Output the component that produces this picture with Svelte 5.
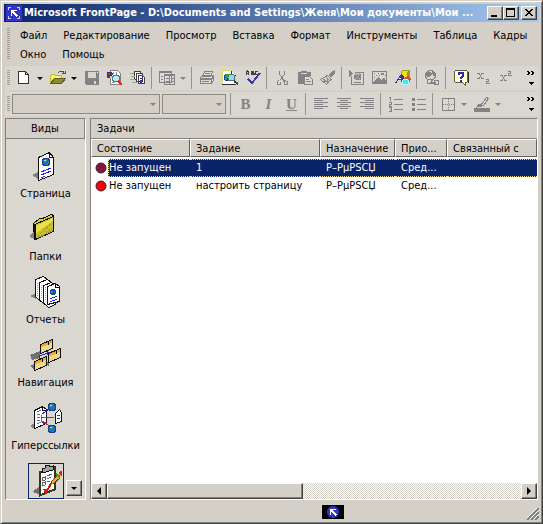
<script lang="ts">
	type Task = {
		id: number;
		color: string;
		state: string;
		title: string;
		assigned: string;
		priority: string;
		linked: string;
	};

	const menu = [
		'Файл',
		'Редактирование',
		'Просмотр',
		'Вставка',
		'Формат',
		'Инструменты',
		'Таблица',
		'Кадры',
		'Окно',
		'Помощь'
	];

	// '|' is a separator, 'v' a drop-down arrow, '-' a disabled one
	const standard = [
		'new', 'v', 'open', 'v', 'save', 'find', 'publish', '|',
		'panes', '-', '|',
		'print', 'preview', 'spelling', '|',
		'cut', 'paste', 'painter', '|',
		'component', 'image', 'drawing', '|',
		'link', '|',
		'help', 'sub', 'sup'
	];
	const formatting = [
		'|', 'bold', 'italic', 'underline', '|',
		'left', 'center', 'right', '|',
		'numbers', 'bullets', '|',
		'borders', '-', 'highlight', '-'
	];

	const views = [
		{ id: 'page', label: 'Страница' },
		{ id: 'folders', label: 'Папки' },
		{ id: 'reports', label: 'Отчеты' },
		{ id: 'navigation', label: 'Навигация' },
		{ id: 'hyperlinks', label: 'Гиперссылки' }
	];

	const columns = ['Состояние', 'Задание', 'Назначение', 'Прио...', 'Связанный с'];

	// user name as stored: UTF-8 bytes read as cp1251
	const user = 'Р–РµР\u0405СЏ';
	const tasks: Task[] = [
		{ id: 1, color: '#841439', state: 'Не запущен', title: '1', assigned: user, priority: 'Сред...', linked: '' },
		{ id: 2, color: '#ff0000', state: 'Не запущен', title: 'настроить страницу', assigned: user, priority: 'Сред...', linked: '' }
	];

	let selected = $state(1);
	let view = $state('tasks');
</script>

{#snippet globe(x: number, y: number)}
	<circle cx={x} cy={y} r="4.5" fill="#203890" stroke="none" />
	<circle cx={x} cy={y} r="3" fill="#2860d8" stroke="none" />
	<path d="M{x - 3} {y - 1}l2-2h3l-1 3-2 1zM{x + 1} {y + 1}l2-1-1 3h-2z" fill="#18a048" stroke="none" />
	<path d="M{x - 2} {y - 2}h2v1h-2z" fill="#a8e8f8" stroke="none" />
{/snippet}

{#snippet tool(name: string)}
	<svg viewBox="0 0 16 16" width="16" height="16" fill="none" stroke="#848284" shape-rendering="crispEdges" aria-hidden="true">
		{#if name === 'new'}
			<path d="M2.5 1.5h7l3 3v9h-10z" fill="#fff" stroke="#303030" />
			<path d="M9.5 1.5v3h3" stroke="#303030" />
		{:else if name === 'open'}
			<path d="M1 5h4l1 1h6v3H6l-4 5H1z" fill="#f8f060" stroke="none" />
			<path d="M.5 13V5.5l1-1h3l1 1h6v3" stroke="#c0b830" />
			<path d="M2 7h1v1H2zM4 8h1v1H4zM6 7h1v1H6zM8 7h1v1H8zM2 10h1v1H2z" fill="#fff" stroke="none" />
			<path d="M.5 13.5l4-5h11l-4 5z" fill="#8c8c30" stroke="#5c5c20" />
			<path d="M8 3l2-2h3l1 2M12 3.5h3V1" stroke="#505050" />
		{:else if name === 'save'}
			<path d="M1 1h14v14H2l-1-1z" fill="#848284" stroke="none" />
			<path d="M4 2h8v6H4zM10 11h2v3h-2z" fill="#d8d5ce" stroke="none" />
			<path d="M13 2h1v1h-1z" fill="#fff" stroke="none" />
		{:else if name === 'find'}
			<path d="M3.5.5h7l3 3v11h-10z" fill="#fff" stroke="#808080" />
			<path d="M6 2h1v2H6zM9 2h1v3H9zM5 12h3v1H5z" fill="#999" stroke="none" />
			<path d="M0 2h5v4H0z" fill="#303068" stroke="none" />
			<path d="M1 3h2v2H1zM5 6h2v2H5z" fill="#e03020" stroke="none" />
			<path d="M4 3h2v2H4zM0 6h3v2H0z" fill="#2040e0" stroke="none" />
			<path d="M3 6h2v2H3z" fill="#f0d820" stroke="none" />
			<circle cx="9" cy="8.5" r="3.5" fill="#a8f4f8" stroke="#607878" />
			<path d="M11 11l4 4" stroke="#e02820" stroke-width="2" />
		{:else if name === 'publish'}
			<path d="M4.5 1.5h6v8h-6z" fill="#fff" stroke="#404040" />
			<path d="M6.5 3.5h6v8h-6zM8.5 5.5h4l2 2v6h-6z" fill="#fff" stroke="#404040" />
			<path d="M10 8.5h3M10 10.5h3M10 12.5h2" stroke="#3030a0" />
			<path d="M0 3.5h4M1 6.5h4M0 9.5h5M2 12.5h5" stroke="#a0a0a0" />
		{:else if name === 'panes'}
			<path d="M.5 1.5h12v11H.5zM5.5 4.5h10v10h-10z" fill="#dedbd4" />
			<path d="M0 2.5h13M5 5.5h11M2 6.5h2M2 9.5h2M7 8.5h3M7 11.5h3M12 8.5h3M12 11.5h3" />
			<path d="M10.5 6v8" />
		{:else if name === 'print'}
			<path d="M5.5 1.5h8l-2 5h-8zM1.5 7.5l3-2h10l-2 4h-11z" fill="#dedbd4" />
			<path d="M1.5 8.5h11v5h-11zM12.5 8.5l2-3v5l-2 3M3 11.5h7M6 3.5h5" />
		{:else if name === 'preview'}
			<path d="M1 1h9l4 4v9H1z" fill="#fff" stroke="none" />
			<path d="M.5 14V.5h9l4 4V14" stroke="#e0d860" />
			<path d="M0 14.5h14M9.5 1v4h4" stroke="#303030" />
			<circle cx="6" cy="7.5" r="4" fill="#2038b8" stroke="none" />
			<path d="M4 4h3v3H5v3H3V6z" fill="#20a850" stroke="none" />
			<circle cx="9.5" cy="7.5" r="3.5" fill="#90dce8" stroke="#507070" />
			<path d="M12 11l4 3" stroke="#404040" stroke-width="2" />
		{:else if name === 'spelling'}
			<path d="M1.5 5V2l1-1 1 1v3M1 3.5h3M6.5 1v4M6 1.5h2v1H6M6 4.5h3v-1H7M13 1.5h-2l-.5 1v1l.5 1h2" stroke="#404040" />
			<path d="M3 9l4 4 8-10" stroke="#3838a8" stroke-width="2" />
		{:else if name === 'cut'}
			<path d="M5.5 1v3l4 6M10.5 1v3l-4 6M5 10.5l-2 1v3h3v-3M9 9.5l1 2v3h3v-3z" />
		{:else if name === 'paste'}
			<path d="M1 2h3V1h6v1h4v4H8v8H1z" fill="#848284" stroke="none" />
			<path d="M4 3h6" stroke="#dedbd4" />
			<path d="M7.5 6.5h5l3 3v5h-8zM9 9.5h3M9 11.5h5" fill="#dedbd4" />
		{:else if name === 'painter'}
			<path d="M15 0v3l-4 5-3-3 5-4z" fill="#848284" stroke="none" />
			<path d="M7.5 5.5l4 4-2 1-4-4zM5.5 6.5l-5 3 6 5 3-4M3 9l4 3M2 11h3M7 9v3" />
		{:else if name === 'component'}
			<path d="M0 0l4 3-4 4z" fill="#848284" stroke="none" />
			<path d="M2.5 6v8.5h12v-12h-9" />
			<path d="M6 4h5l1 1v4l-1 1H6L5 9V5zM5 12h7v1H5z" fill="#848284" stroke="none" />
			<path d="M6 3l5 7M11 3L6 10" stroke="#a8a6a2" />
		{:else if name === 'image'}
			<path d="M.5 1.5h14v12H.5z" />
			<path d="M1 13l5-6 3 3 3-3 3 6zM9 3h3v2H9zM2 3h1v1H2zM4 5h1v1H4zM6 3h1v1H6zM2 7h1v1H2zM7 5h1v1H7zM13 5h1v1h-1z" fill="#848284" stroke="none" />
		{:else if name === 'drawing'}
			<path d="M6 2l2-2h6v7l-3 2H6z" fill="#f0e018" stroke="#a89830" />
			<path d="M12 2l2-2v7l-2 2z" fill="#a89018" stroke="none" />
			<path d="M0 13h2l1-3h3l1 3h2V6L6 4z" fill="#3030b0" stroke="none" />
			<path d="M4 8h2v1H4z" fill="#fff" stroke="none" />
			<path d="M8 9l5-3 3 2-1 4-4 2z" fill="#d05040" stroke="none" />
			<circle cx="10.5" cy="12" r="3" fill="#38f0f0" stroke="#b0ffff" />
		{:else if name === 'link'}
			<circle cx="6.5" cy="5.5" r="5" />
			<path d="M3 2h3l2 2-2 3H3L2 5zM8 1l3 2v3H9z" fill="#848284" stroke="none" />
			<path d="M3.5 9.5h4v4h-4zM10.5 10.5h4v4h-4z" fill="#dedbd4" />
			<path d="M6 12.5h6" stroke-width="2" />
		{:else if name === 'help'}
			<path d="M1.5 1.5l1-1h11l1 1v10l-1 1h-1v3l-3-3h-7l-1-1z" fill="#ffffd0" stroke="#605c40" />
			<path d="M15.5 2v10h-1" stroke="#303030" />
			<path d="M6 5V3h4v3L8 8v1M8 10v2" stroke="#2828b0" stroke-width="2" />
		{:else if name === 'sub'}
			<path d="M1 3.5h2l3 5h2M8 3.5H6l-3 5H1" />
			<path d="M10 9.5h2.5v2H10.5v2H14" />
		{:else if name === 'sup'}
			<path d="M1 5.5h2l3 5h2M8 5.5H6l-3 5H1" />
			<path d="M9 1.5h2.5v2H9.5v2H13" />
		{:else if name === 'left' || name === 'center' || name === 'right'}
			<path d="M1 2.5h14M1 6.5h14M1 10.5h14" />
			{#if name === 'left'}
				<path d="M1 4.5h9M1 8.5h9M1 12.5h9" />
			{:else if name === 'center'}
				<path d="M4 4.5h8M4 8.5h8M4 12.5h8" />
			{:else}
				<path d="M6 4.5h9M6 8.5h9M6 12.5h9" />
			{/if}
		{:else if name === 'numbers'}
			<path d="M6 3.5h9M6 8.5h9M6 13.5h9M1 1.5h1.5V5M1 6.5h2v2H1.5V10H4M1 11.5h2.5v4H1M2 13.5h1" />
		{:else if name === 'bullets'}
			<path d="M1 2h3v3H1zM1 7h3v3H1zM1 12h3v3H1z" fill="#848284" stroke="none" />
			<path d="M6 3.5h9M6 8.5h9M6 13.5h9" />
		{:else if name === 'borders'}
			<path d="M2.5 2.5h12v12h-12z" />
			<path d="M8.5 3v11M3 8.5h11" stroke-dasharray="1 1" />
		{:else if name === 'highlight'}
			<path d="M12.5 1.5l2 1-5 7h-3zM5 8l3 2-5 1z" />
			<path d="M4 8h3v2H4z" fill="#848284" stroke="none" />
			<path d="M0 12h16v4H0z" fill="#848284" stroke="none" />
		{/if}
	</svg>
{/snippet}

{#snippet viewIcon(name: string)}
	<svg viewBox="0 0 32 32" width="32" height="32" fill="none" stroke="#101010" shape-rendering="crispEdges" aria-hidden="true">
		{#if name === 'page'}
			<path d="M3 25l6-3v7z" fill="#808080" stroke="none" />
			<path d="M9.5 30.5v-23l11-5 4 5v17z" fill="#fff" />
			<path d="M20.5 2.5v5h4" />
			<path d="M12 8l3-2" stroke="#c8e8f8" />
			{@render globe(17, 12)}
			<path d="M12 22l10-4M12 25l10-4M12 28l4-2" stroke="#2020f0" />
		{:else if name === 'folders'}
			<path d="M0 23l5-4v7z" fill="#808080" stroke="none" />
			<path d="M4.5 10.5l6-5h3l9-4 2 1v15l-19 9z" fill="#d8d040" />
			<path d="M5.5 11.5l19-8v15l-18 8z" fill="#c8c030" />
			<path d="M7 13l17-8v3L7 20z" fill="#e8e050" stroke="none" />
			<path d="M8 24l15-14M9 25l14-10M12 24l11-7" stroke="#a09820" stroke-dasharray="1 1" />
			<path d="M5.5 11.5v15" stroke-width="2" />
		{:else if name === 'reports'}
			<path d="M1 20l6-3v6z" fill="#808080" stroke="none" />
			{#each [0, 4, 8] as o}
				<path d="M{6.5 + o} {20.5 + o / 2}v-17l8-3 4 3v19l-7 3z" transform="translate(0 {o / 4})" fill="#fff" />
				<path d="M{8.5 + o} {7 + o / 2}v13" stroke="#a0a0a0" stroke-dasharray="1 1" />
			{/each}
			<path d="M18.5 28.5v-18l8-3 4 3v15z" fill="#fff" />
			<path d="M26.5 7.5v4h4" />
			<circle cx="24" cy="16" r="3" fill="#1850b8" stroke="none" />
			<path d="M22 15h2v2h-2z" fill="#18a048" stroke="none" />
			<path d="M21 23l7-3M21 26l7-3" stroke="#2020f0" />
		{:else if name === 'navigation'}
			<path d="M0 16l10-4v7l-8 2zM15 25l4-3v5zM0 27l4-2v5z" fill="#707070" stroke="none" />
			<path d="M17.5 12v4M9.5 20v-3l17-6" stroke="#2020f0" />
			{#each [[10, 0], [4, 17], [18, 9]] as [x, y]}
				<path d="M{x + 0.5} {y + 5.5}l12-5v9l-12 5z" fill="#e8d890" />
				<path d="M{x + 1} {y + 7}l11-5" stroke="#f0a828" stroke-width="3" />
				<path d="M{x + 0.5} {y + 5.5}l12-5M{x + 8} {y + 3}v3" />
			{/each}
		{:else if name === 'hyperlinks'}
			<path d="M0 24l5-3v6z" fill="#808080" stroke="none" />
			<path d="M4.5 26.5v-18l8-4 4 3v14z" fill="#fff" />
			<path d="M12.5 4.5v4h4" />
			<path d="M7 10l4-2M7 13l3-1M7 16l3-1M7 19l3-1M7 22l6-3M11 13v6" stroke="#707070" />
			<path d="M25.5 21.5v-10l4-4 2 3v9z" fill="#fff" />
			<path d="M27 14l3-1M27 17l3-1" stroke="#2040e0" />
			<path d="M11 15.5h13M13 19l6 5" stroke="#e02020" />
			<path d="M12 12l7-5M12 20l3 2" stroke="#2020f0" />
			{@render globe(22, 5)}
			{@render globe(22, 27)}
		{:else if name === 'tasks'}
			<path d="M2 27l7-5v7z" fill="#707070" stroke="none" />
			<path d="M9.5 30.5v-23l15-5v22z" fill="#fff" stroke="#35351a" stroke-width="2" />
			<path d="M12 8V4l3-1 1-3h3l1 2 3-1v4z" fill="#a0a0a0" />
			<path d="M12 13l3-1v3l-3 1zM12 18l3-1v3l-3 1zM17 11l5-2M17 14l4-2M17 17l3-1" stroke="#606060" />
			<path d="M14 24l2 3 5-8" stroke="#f01010" stroke-width="2" />
			<path d="M20 21l2-6 7-7 3 3-8 7z" fill="#f8b020" stroke="none" />
			<path d="M20 21l2-5M22 16l6-6M23 19l7-6" stroke="#604010" />
			<path d="M26 9l4 3" stroke="#18a030" stroke-width="2" />
			<path d="M28 8l2-2h2v4l-1 1z" fill="#e02020" stroke="none" />
		{/if}
	</svg>
{/snippet}

{#snippet strip(items: string[])}
	{#each items as item}
		{#if item === '|'}
			<span class="sep"></span>
		{:else if item === 'v' || item === '-'}
			<button class="drop" disabled={item === '-'} aria-label="Ещё"><span class="tri"></span></button>
		{:else if item === 'bold'}
			<button class="tool letter" disabled><b>B</b></button>
		{:else if item === 'italic'}
			<button class="tool letter" disabled><i>I</i></button>
		{:else if item === 'underline'}
			<button class="tool letter" disabled><u>U</u></button>
		{:else}
			<button class="tool" aria-label={item}>{@render tool(item)}</button>
		{/if}
	{/each}
{/snippet}

{#snippet overflow()}
	<button class="more" aria-label="Другие кнопки">
		<svg viewBox="0 0 8 16" width="8" height="16" fill="none" stroke="#000" shape-rendering="crispEdges" aria-hidden="true">
			<path d="M0 1l2 2-2 2M1 1l2 2-2 2M4 1l2 2-2 2M5 1l2 2-2 2" />
			<path d="M2 12h5v1H6v1H5v1H4v-1H3v-1H2z" fill="#000" stroke="none" />
		</svg>
	</button>
{/snippet}

<main class="window">
	<header class="titlebar">
		<svg viewBox="0 0 16 16" width="16" height="16" fill="none" stroke="#fff" shape-rendering="crispEdges" aria-hidden="true">
			<path d="M0 0h16v16H0z" fill="#3333cc" stroke="none" />
			<path d="M5 2.5H2.5V5M11 2.5h2.5V5M5 13.5H2.5V11M11 13.5h2.5V11" stroke="#d0d0ff" />
			<path d="M5 5h6v1H8v1h1v1h1v1h1v1h1v1h-1v1h-1v-1H9v-1H8V9H7V8H6v3H5z" fill="#fff" stroke="none" />
		</svg>
		<h1>Microsoft FrontPage - D:\Documents and Settings\Женя\Мои документы\Мои ...</h1>
		<div class="controls">
			<button aria-label="Свернуть">
				<svg viewBox="0 0 12 10" width="12" height="10" aria-hidden="true"><path d="M2 7h6v2H2z" /></svg>
			</button>
			<button aria-label="Развернуть">
				<svg viewBox="0 0 12 10" width="12" height="10" aria-hidden="true"><path d="M1 0h9v9H1zM2 2v6h7V2z" fill-rule="evenodd" /></svg>
			</button>
			<button class="close" aria-label="Закрыть">
				<svg viewBox="0 0 12 10" width="12" height="10" shape-rendering="crispEdges" aria-hidden="true">
					<path d="M2 1h2v1h1v1h2V2h1V1h2v1H9v1H8v1H7v1h1v1h1v1h1v1H8V7H7V6H5v1H4v1H2V7h1V6h1V5h1V4H4V3H3V2H2z" />
				</svg>
			</button>
		</div>
	</header>

	<nav class="menubar">
		<span class="grip"></span>
		<div class="menu">
			{#each menu as item}
				<button>{item}</button>
			{/each}
		</div>
	</nav>

	<div class="toolbar">
		<span class="grip"></span>
		{@render strip(standard)}
		{@render overflow()}
	</div>
	<div class="toolbar">
		<span class="grip"></span>
		<span class="combo style"><select disabled aria-label="Стиль"></select></span>
		<span class="combo"><select disabled aria-label="Шрифт"></select></span>
		{@render strip(formatting)}
		{@render overflow()}
	</div>

	<div class="content">
		<aside class="views">
			<h2>Виды</h2>
			<div class="view-list">
				{#each views as v (v.id)}
					<button class="view" onclick={() => (view = v.id)}>
						{@render viewIcon(v.id)}
						<span>{v.label}</span>
					</button>
				{/each}
				<button class="view-tasks" class:active={view === 'tasks'} onclick={() => (view = 'tasks')} aria-label="Задачи">
					{@render viewIcon('tasks')}
				</button>
			</div>
			<button class="scroll-down raised" aria-label="Прокрутить вниз"><span class="tri"></span></button>
		</aside>

		<section class="pane">
			<h2>Задачи</h2>
			<div class="list">
				<table>
					<colgroup>
						<col class="c-state" />
						<col class="c-title" />
						<col class="c-assigned" />
						<col class="c-priority" />
						<col />
					</colgroup>
					<thead>
						<tr>
							{#each columns as c}
								<th>{c}</th>
							{/each}
						</tr>
					</thead>
					<tbody>
						{#each tasks as t (t.id)}
							<tr class:selected={selected === t.id} onclick={() => (selected = t.id)}>
								<td class="state">
									<svg viewBox="0 0 12 12" width="12" height="12" aria-hidden="true">
										<circle cx="6" cy="6" r="5" fill={t.color} stroke="#402040" />
									</svg>
									<span>{t.state}</span>
								</td>
								<td>{t.title}</td>
								<td>{t.assigned}</td>
								<td>{t.priority}</td>
								<td>{t.linked}</td>
							</tr>
						{/each}
					</tbody>
				</table>
			</div>
			<div class="hscroll">
				<button class="raised" aria-label="Влево"><span class="tri west"></span></button>
				<span class="thumb raised"></span>
				<span class="track"></span>
				<button class="raised" aria-label="Вправо"><span class="tri east"></span></button>
			</div>
		</section>
	</div>

	<footer class="status">
		<svg viewBox="0 0 22 14" width="22" height="14" aria-hidden="true">
			<path d="M0 0h22v14H0z" fill="#000" />
			<circle cx="11" cy="7" r="6" fill="#3333cc" />
			<path d="M8 4h6v1h-3v1h1v1h1v1h1v1h1v1h-1v1h-1v-1h-1V9h-1V8h-1V7H9v3H8z" fill="#fff" />
		</svg>
		<div class="corner">
			<svg viewBox="0 0 12 12" width="12" height="12" fill="none" aria-hidden="true">
				<path d="M0 12L12 0M4 12l8-8M8 12l4-4" stroke="#808080" stroke-width="2" />
				<path d="M-1 11L11-1M3 11l9-9M7 11l5-5" stroke="#fff" />
			</svg>
		</div>
	</footer>
</main>

<style>
	:global(body) {
		margin: 0;
		background: #d4d0c8;
	}

	.window {
		box-sizing: border-box;
		min-height: 100vh;
		display: flex;
		flex-direction: column;
		padding: 3px;
		border: 1px solid;
		border-color: #d4d0c8 #404040 #404040 #d4d0c8;
		box-shadow: inset 1px 1px #fff, inset -1px -1px #808080;
		background: #d4d0c8;
		color: #000;
		font: 11px/14px 'DejaVu Sans Condensed', Tahoma, 'DejaVu Sans', sans-serif;
		cursor: default;
	}

	button {
		box-sizing: border-box;
		margin: 0;
		padding: 0;
		border: 0;
		background: transparent;
		color: inherit;
		font: inherit;
	}
	svg {
		display: block;
		flex: none;
	}
	h1,
	h2 {
		margin: 0;
		font: inherit;
	}

	.raised,
	.controls button {
		background: #d4d0c8;
		border: 1px solid;
		border-color: #fff #404040 #404040 #fff;
		box-shadow: inset -1px -1px #808080;
	}

	.titlebar {
		display: flex;
		align-items: center;
		gap: 2px;
		height: 18px;
		padding: 0 2px;
		background: linear-gradient(90deg, #0a246a, #a6caf0);
		color: #fff;
	}
	h1 {
		flex: 1;
		min-width: 0;
		overflow: hidden;
		white-space: nowrap;
		font-weight: bold;
	}
	.controls {
		display: flex;
	}
	.controls button {
		display: flex;
		align-items: center;
		justify-content: center;
		width: 16px;
		height: 14px;
	}
	.controls .close {
		margin-left: 2px;
	}

	.grip {
		flex: none;
		width: 3px;
		background: repeating-linear-gradient(#a09d97 0 1px, transparent 1px 2px);
	}

	.menubar {
		display: flex;
		padding: 4px 3px 2px;
	}
	.menubar .grip {
		margin: 2px 0 4px;
	}
	.menu {
		display: flex;
		flex-wrap: wrap;
		margin-left: 2px;
	}
	.menu button {
		height: 19px;
		padding: 0 8px;
	}

	.toolbar {
		display: flex;
		align-items: center;
		height: 24px;
		margin: 0 0 2px 1px;
		padding: 0 2px;
		background: #dad7d0;
	}
	.toolbar .grip {
		height: 16px;
		margin-right: 2px;
	}
	.tool {
		display: flex;
		flex: none;
		align-items: center;
		justify-content: center;
		width: 23px;
		height: 22px;
	}
	.letter {
		color: #848284;
		font: 15px/16px 'Liberation Serif', serif;
		font-weight: bold;
	}
	.drop {
		display: flex;
		flex: none;
		width: 11px;
		padding-left: 2px;
	}
	.drop:disabled {
		color: #848284;
	}
	.tri {
		width: 0;
		height: 0;
		border: 3px solid transparent;
		border-top-color: currentColor;
		border-bottom: 0;
	}
	.sep {
		flex: none;
		width: 1px;
		height: 22px;
		margin: 0 3px 0 2px;
		background: #96938e;
	}
	.more {
		margin-left: auto;
		margin-right: 2px;
	}
	.combo {
		position: relative;
		box-sizing: border-box;
		width: 66px;
		padding-right: 2px;
	}
	.combo.style {
		width: 150px;
	}
	.combo::after {
		content: '';
		position: absolute;
		right: 6px;
		top: 9px;
		border: 3px solid transparent;
		border-top-color: #848284;
		border-bottom: 0;
	}
	select {
		display: block;
		appearance: none;
		box-sizing: border-box;
		width: 100%;
		height: 20px;
		border: 1px solid #8c8984;
		border-radius: 0;
		background: #d4d0c8;
		opacity: 1;
	}

	.content {
		flex: 1;
		display: flex;
		gap: 4px;
		padding: 0 1px;
	}
	.content h2 {
		height: 20px;
		box-sizing: border-box;
		padding: 3px 6px;
		border-bottom: 1px solid #808080;
	}
	.views,
	.pane {
		display: flex;
		flex-direction: column;
		border: 1px solid;
		border-color: #808080 #fff #fff #808080;
	}
	.views {
		position: relative;
		box-sizing: border-box;
		flex: none;
		width: 81px;
		background: #dad7d0;
	}
	.views h2 {
		border-right: 1px solid #808080;
		background: #d4d0c8;
		text-align: center;
	}
	.view-list {
		display: flex;
		flex-direction: column;
		align-items: center;
		padding-top: 11px;
	}
	.view {
		display: flex;
		flex-direction: column;
		align-items: center;
		gap: 5px;
		height: 63px;
	}
	.view-tasks {
		margin-top: -2px;
		padding: 1px;
		border: 1px solid transparent;
	}
	.view-tasks.active {
		border-color: #0a246a;
	}
	.scroll-down {
		position: absolute;
		right: 3px;
		bottom: 3px;
		display: flex;
		align-items: center;
		justify-content: center;
		width: 16px;
		height: 16px;
	}

	.pane {
		flex: 1;
		min-width: 0;
	}
	.list {
		flex: 1;
		background: #fff;
	}
	table {
		width: 100%;
		table-layout: fixed;
		border-collapse: separate;
		border-spacing: 0;
	}
	.c-state {
		width: 99px;
	}
	.c-title {
		width: 130px;
	}
	.c-assigned {
		width: 75px;
	}
	.c-priority {
		width: 52px;
	}
	th {
		box-sizing: border-box;
		height: 18px;
		padding: 1px 5px 0;
		border: 1px solid;
		border-color: #fff #606060 #606060 #fff;
		background: #d4d0c8;
		font-weight: normal;
		line-height: 15px;
		text-align: left;
		white-space: nowrap;
		overflow: hidden;
	}
	tbody::before {
		content: '';
		display: block;
		height: 2px;
	}
	td {
		height: 18px;
		box-sizing: border-box;
		padding: 0 0 0 6px;
		border: 1px dotted transparent;
		border-width: 1px 0;
		white-space: nowrap;
	}
	td.state {
		display: flex;
		align-items: center;
		gap: 1px;
		padding-left: 4px;
		border: 0;
	}
	.state span {
		box-sizing: border-box;
		flex: 1;
		height: 18px;
		border: 1px dotted transparent;
		border-right: 0;
		line-height: 16px;
	}
	.selected td,
	.selected .state span {
		border-color: #f0d890;
		background: #0a246a;
		color: #fff;
	}
	.selected td.state {
		background: #fff;
	}

	.hscroll {
		display: flex;
		height: 16px;
	}
	.hscroll button {
		display: flex;
		flex: none;
		align-items: center;
		justify-content: center;
		width: 16px;
	}
	.thumb {
		box-sizing: border-box;
		width: 44%;
		flex: none;
	}
	.track {
		flex: 1;
		background: conic-gradient(#fff 25%, #d4d0c8 0 50%, #fff 0 75%, #d4d0c8 0) 0 0 / 2px 2px;
	}
	.tri.west,
	.tri.east {
		border: 4px solid transparent;
	}
	.tri.west {
		border-left: 0;
		border-right-color: #000;
	}
	.tri.east {
		border-right: 0;
		border-left-color: #000;
	}

	.status {
		display: flex;
		align-items: center;
		justify-content: flex-end;
		height: 20px;
	}
	.status > svg {
		margin-top: 4px;
	}
	.corner {
		display: flex;
		justify-content: flex-end;
		align-self: flex-end;
		width: 195px;
	}
</style>
